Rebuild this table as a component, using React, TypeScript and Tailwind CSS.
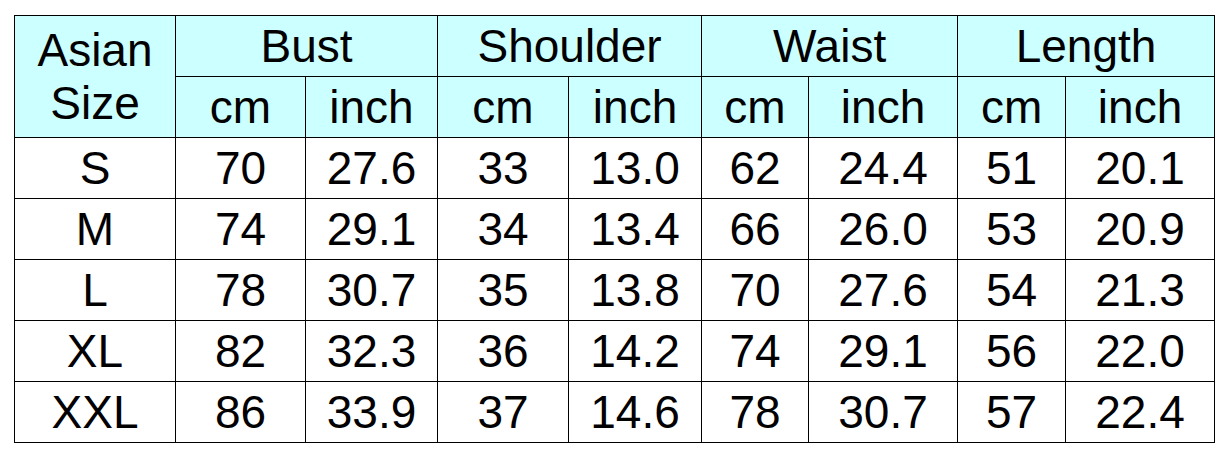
import { Fragment } from "react";

const groups = ["Bust", "Shoulder", "Waist", "Length"];

const rows: [string, string[]][] = [
  ["S", ["70", "27.6", "33", "13.0", "62", "24.4", "51", "20.1"]],
  ["M", ["74", "29.1", "34", "13.4", "66", "26.0", "53", "20.9"]],
  ["L", ["78", "30.7", "35", "13.8", "70", "27.6", "54", "21.3"]],
  ["XL", ["82", "32.3", "36", "14.2", "74", "29.1", "56", "22.0"]],
  ["XXL", ["86", "33.9", "37", "14.6", "78", "30.7", "57", "22.4"]],
];

const colWidths = [161, 130, 132, 131, 133, 107, 149, 108, 149];

export default function App() {
  return (
    <div className="w-[1229px] h-[457px] bg-white pt-[15px] pl-[14px] font-['Liberation_Sans',Arial,sans-serif] text-black">
      <table className="table-fixed border-collapse w-[1201px] text-[46px] leading-[1.15] text-center">
        <colgroup>
          {colWidths.map((w, i) => (
            <col key={i} style={{ width: w }} />
          ))}
        </colgroup>
        <thead>
          <tr className="h-[61px] bg-[#ccffff]">
            <th rowSpan={2} className="border border-black font-normal align-middle">
              Asian
              <br />
              Size
            </th>
            {groups.map((g) => (
              <th key={g} colSpan={2} className="border border-black font-normal">
                {g}
              </th>
            ))}
          </tr>
          <tr className="h-[61px] bg-[#ccffff]">
            {groups.map((g) => (
              <Fragment key={g}>
                <th className="border border-black font-normal">cm</th>
                <th className="border border-black font-normal">inch</th>
              </Fragment>
            ))}
          </tr>
        </thead>
        <tbody>
          {rows.map(([size, vals]) => (
            <tr key={size} className="h-[61px]">
              <td className="border border-black">{size}</td>
              {vals.map((v, i) => (
                <td key={i} className="border border-black">
                  {v}
                </td>
              ))}
            </tr>
          ))}
        </tbody>
      </table>
    </div>
  );
}
